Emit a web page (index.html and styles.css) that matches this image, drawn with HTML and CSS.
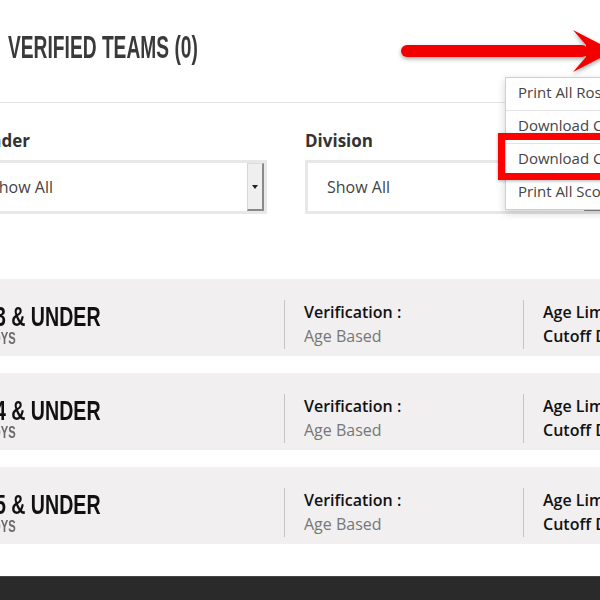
FILE: index.html
```html
<!DOCTYPE html>
<html lang="en">
<head>
  <meta charset="UTF-8" />
  <meta name="viewport" content="width=device-width, initial-scale=1.0" />
  <title>Teams</title>
  <link rel="stylesheet" href="styles.css">
</head>
<body>
  <div class="page">
    <header class="teams-header">
      <h1 class="teams-title">VERIFIED TEAMS (0)</h1>
    </header>

    <section class="filters">
      <div class="filter">
        <label class="filter-label">Gender</label>
        <div class="select">
          <span class="select-value">Show All</span>
          <span class="select-btn"><span class="caret"></span></span>
        </div>
      </div>
      <div class="filter">
        <label class="filter-label">Division</label>
        <div class="select">
          <span class="select-value">Show All</span>
          <span class="select-btn"><span class="caret"></span></span>
        </div>
      </div>
    </section>

    <section class="divisions">
      <div class="division-row">
        <div class="team">
          <div class="team-name">13 &amp; UNDER</div>
          <div class="team-gender">BOYS</div>
        </div>
        <div class="info info-verify">
          <div class="info-label">Verification :</div>
          <div class="info-value">Age Based</div>
        </div>
        <div class="info">
          <div class="info-label">Age Limit :</div>
          <div class="info-label">Cutoff Date :</div>
        </div>
      </div>
      <div class="division-row">
        <div class="team">
          <div class="team-name">14 &amp; UNDER</div>
          <div class="team-gender">BOYS</div>
        </div>
        <div class="info info-verify">
          <div class="info-label">Verification :</div>
          <div class="info-value">Age Based</div>
        </div>
        <div class="info">
          <div class="info-label">Age Limit :</div>
          <div class="info-label">Cutoff Date :</div>
        </div>
      </div>
      <div class="division-row">
        <div class="team">
          <div class="team-name">15 &amp; UNDER</div>
          <div class="team-gender">BOYS</div>
        </div>
        <div class="info info-verify">
          <div class="info-label">Verification :</div>
          <div class="info-value">Age Based</div>
        </div>
        <div class="info">
          <div class="info-label">Age Limit :</div>
          <div class="info-label">Cutoff Date :</div>
        </div>
      </div>
    </section>
  </div>

  <footer class="site-footer"></footer>

  <!-- dropdown + screenshot annotations sit over the page -->
  <ul class="actions-menu">
    <li>Print All Rosters</li>
    <li>Download CSV</li>
    <li>Download Coaches</li>
    <li>Print All Scoresheets</li>
  </ul>
  <div class="callout-box"></div>
  <svg class="callout-arrow" width="220" height="70" viewBox="0 0 220 70">
    <line x1="7" y1="31" x2="182" y2="31" stroke="#f20000" stroke-width="12" stroke-linecap="round" />
    <polygon points="173,10 214,31 173,52 186,37 186,25" fill="#f20000" />
  </svg>
</body>
</html>
```

FILE: styles.css
```css
html, body {
  overflow: hidden;
}
body {
  margin: 0;
  padding: 0;
  position: relative;
  background: white;
  font-family: 'Open Sans', sans-serif;
  color: #333;
}
.page {
  margin-left: -32px;
  width: 700px;
}
.teams-header {
  padding: 29px 0 37px 40px;
  border-bottom: 1px solid #e6e6e6;
}
.teams-title {
  margin: 0;
  font-family: 'Liberation Sans', Arial, sans-serif;
  font-weight: bold;
  font-size: 32px;
  line-height: 36px;
  color: #3a3a3a;
  transform: scaleX(0.6);
  transform-origin: left;
  white-space: nowrap;
}
.filters {
  display: grid;
  grid-template-columns: 299px 299px;
  column-gap: 38px;
  padding-top: 26px;
}
.filter-label {
  display: block;
  font-size: 17px;
  font-weight: bold;
  line-height: 24px;
  margin-bottom: 7px;
  color: #333;
}
.select {
  display: flex;
  align-items: center;
  height: 54px;
  box-sizing: border-box;
  border: 3px solid #e8e8e8;
  background: white;
}
.select-value {
  flex: 1;
  padding-left: 19px;
  font-size: 16px;
  color: #444;
}
.select-btn {
  align-self: stretch;
  width: 17px;
  display: flex;
  align-items: center;
  justify-content: center;
  background: #efefef;
  border-left: 1px solid #d6d6d6;
  border-top: 1px solid #dcdcdc;
  border-right: 2px solid #8a8a8a;
  border-bottom: 2px solid #8a8a8a;
  box-sizing: border-box;
}
.caret {
  width: 0;
  height: 0;
  border-left: 3px solid transparent;
  border-right: 3px solid transparent;
  border-top: 4px solid #222;
}
.divisions {
  margin-top: 65px;
}
.division-row {
  display: flex;
  height: 77px;
  box-sizing: border-box;
  padding: 21px 0 7px;
  margin-bottom: 17px;
  background: #f1eff0;
}
.team {
  width: 316px;
  padding: 3px 0 0 16px;
  box-sizing: border-box;
}
.team-name {
  font-family: 'Liberation Sans', Arial, sans-serif;
  font-weight: bold;
  font-size: 28px;
  line-height: 28px;
  color: #111;
  transform: scaleX(0.7);
  transform-origin: left;
  white-space: nowrap;
}
.team-gender {
  font-family: 'Liberation Sans', Arial, sans-serif;
  font-weight: bold;
  font-size: 16px;
  line-height: 16px;
  color: #6a6a6a;
  transform: scaleX(0.7);
  transform-origin: left;
}
.info {
  border-left: 1px solid #c4c4c4;
  padding-left: 19px;
  box-sizing: border-box;
  font-size: 16px;
  line-height: 24px;
  white-space: nowrap;
}
.info-verify {
  width: 239px;
}
.info-label {
  font-weight: 600;
  color: #111;
}
.info-value {
  color: #777;
}
.site-footer {
  margin-top: 32px;
  height: 120px;
  background: #2a2a2a;
  border-top: 1px solid #444;
}
.actions-menu {
  position: absolute;
  left: 505px;
  top: 77px;
  width: 160px;
  margin: 0;
  padding: 0;
  list-style: none;
  background: white;
  border: 1px solid #cfcfcf;
  box-shadow: 0 3px 8px rgba(0, 0, 0, 0.18);
}
.actions-menu li {
  line-height: 29px;
  padding: 0 0 3px 12px;
  border-bottom: 1px solid #e3e3e3;
  font-size: 15px;
  color: #444;
  white-space: nowrap;
}
.actions-menu li:last-child {
  border-bottom: none;
}
.callout-box {
  position: absolute;
  left: 498px;
  top: 133px;
  width: 130px;
  height: 47px;
  box-sizing: border-box;
  border: 7px solid #f00;
  box-shadow: 0 1px 3px rgba(0, 0, 0, 0.3);
}
.callout-arrow {
  position: absolute;
  left: 400px;
  top: 20px;
  overflow: visible;
  filter: drop-shadow(0 2px 2px rgba(0, 0, 0, 0.35));
}
```
